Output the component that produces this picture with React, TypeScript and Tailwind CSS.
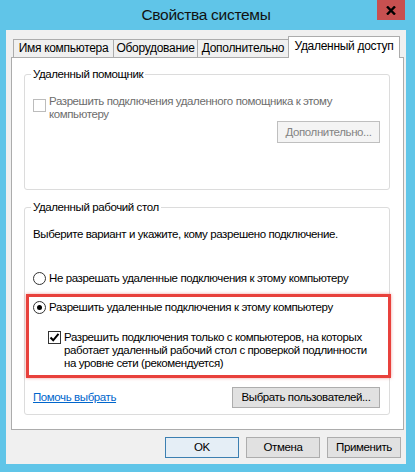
import React from "react";

function CheckBox({ checked, disabled }: { checked?: boolean; disabled?: boolean }) {
  return (
    <div
      className={`w-[13px] h-[13px] shrink-0 border bg-white flex items-center justify-center ${
        disabled ? "border-[#bcbcbc]" : "border-[#333333]"
      }`}
    >
      {checked && (
        <svg width="11" height="11" viewBox="0 0 11 11">
          <path d="M1.5 5.5 L4.2 8.3 L9.5 1.8" fill="none" stroke="#000" strokeWidth="2" />
        </svg>
      )}
    </div>
  );
}

function Radio({ checked }: { checked?: boolean }) {
  return (
    <div className="w-[13px] h-[13px] shrink-0 rounded-full border border-[#333333] bg-white flex items-center justify-center">
      {checked && <div className="w-[5px] h-[5px] rounded-full bg-black" />}
    </div>
  );
}

export default function App() {
  return (
    <div className="w-[415px] h-[472px] bg-[#60c5e8] flex flex-col pl-[6px] pr-[9px] pb-[8px] font-['Liberation_Sans',sans-serif] text-[11.5px] leading-[13px] tracking-[-0.4px] text-black">
      {/* title bar */}
      <div className="relative h-[30px] flex items-center justify-center">
        <span className="text-[15.5px] leading-[18px] tracking-[-0.3px] text-[#111]">Свойства системы</span>
        <div className="absolute right-[1px] top-0 w-[28px] h-[20px] bg-[#c75050] flex items-center justify-center">
          <svg width="10" height="9" viewBox="0 0 10 9">
            <path d="M1 0.5 L9 8.5 M9 0.5 L1 8.5" stroke="#000" strokeWidth="2.4" />
          </svg>
        </div>
      </div>

      {/* client */}
      <div className="flex-1 bg-[#f0f0f0] flex flex-col pl-[5px] pr-[2px] pt-[6px]">
        {/* tabs */}
        <div className="flex items-end h-[21px] pl-[2px] text-[12px] tracking-[-0.3px]">
          <div className="w-[101px] h-[18px] border border-b-0 border-[#acacac] bg-[#f0f0f0] flex items-center justify-center whitespace-nowrap">
            Имя компьютера
          </div>
          <div className="-ml-px w-[85px] h-[18px] border border-b-0 border-[#acacac] bg-[#f0f0f0] flex items-center justify-center whitespace-nowrap">
            Оборудование
          </div>
          <div className="-ml-px w-[92px] h-[18px] border border-b-0 border-[#acacac] bg-[#f0f0f0] flex items-center justify-center whitespace-nowrap">
            Дополнительно
          </div>
          <div className="relative z-10 -ml-px -mb-px w-[112px] h-[22px] border border-b-0 border-[#acacac] bg-white flex items-center justify-center whitespace-nowrap pb-[2px]">
            Удаленный доступ
          </div>
        </div>

        {/* panel */}
        <div className="h-[373px] border border-[#acacac] bg-white flex flex-col pl-[12px] pr-[13px] pt-[10px]">
          {/* group 1 */}
          <fieldset className="h-[122px] border border-[#dcdcdc] rounded-[3px] flex flex-col">
            <legend className="ml-[6px] px-[2px]">Удаленный помощник</legend>
            <div className="flex items-start gap-[3px] pl-[8px] mt-[14px] text-[#6d6d6d]">
              <div className="mt-[4px]">
                <CheckBox disabled />
              </div>
              <div className="whitespace-nowrap">
                Разрешить подключения удаленного помощника к этому
                <br />
                компьютеру
              </div>
            </div>
            <div className="flex-1" />
            <div className="self-end mr-[9px] mb-[4px] w-[103px] h-[22px] border border-[#bfbfbf] bg-[#f4f4f4] text-[#838383] flex items-center justify-center whitespace-nowrap">
              Дополнительно...
            </div>
          </fieldset>

          {/* group 2 */}
          <fieldset className="mt-[11px] h-[214px] border border-[#dcdcdc] rounded-[3px] flex flex-col">
            <legend className="ml-[6px] px-[2px]">Удаленный рабочий стол</legend>
            <div className="pl-[8px] mt-[14px] whitespace-nowrap">Выберите вариант и укажите, кому разрешено подключение.</div>
            <div className="flex items-center gap-[3px] pl-[8px] mt-[31px] whitespace-nowrap">
              <Radio />
              <span>Не разрешать удаленные подключения к этому компьютеру</span>
            </div>
            <div className="mt-[9px] ml-[1px] -mr-[2px] border-[3px] border-[#e8413c] pl-[4px] pt-[4px] pb-[5px] shadow-[0_0_3px_rgba(232,65,60,0.5)]">
              <div className="flex items-center gap-[3px] whitespace-nowrap">
                <Radio checked />
                <span>Разрешить удаленные подключения к этому компьютеру</span>
              </div>
              <div className="flex items-start gap-[3px] pl-[15px] mt-[17px]">
                <div className="mt-[0px]">
                  <CheckBox checked />
                </div>
                <div className="whitespace-nowrap">
                  Разрешить подключения только с компьютеров, на которых
                  <br />
                  работает удаленный рабочий стол с проверкой подлинности
                  <br />
                  на уровне сети (рекомендуется)
                </div>
              </div>
            </div>
            <div className="flex items-center justify-between pl-[8px] pr-[9px] mt-[9px]">
              <span className="text-[#0066cc] underline">Помочь выбрать</span>
              <div className="w-[148px] h-[21px] border border-[#adadad] bg-[#e1e1e1] flex items-center justify-center whitespace-nowrap">
                Выбрать пользователей...
              </div>
            </div>
          </fieldset>
        </div>

        {/* bottom buttons */}
        <div className="flex justify-end gap-[7px] pr-[3px] mt-[7px]">
          <div className="w-[74px] h-[21px] border border-[#3c7fb1] bg-[#e5eef6] flex items-center justify-center">
            OK
          </div>
          <div className="w-[74px] h-[21px] border border-[#adadad] bg-[#e1e1e1] flex items-center justify-center">
            Отмена
          </div>
          <div className="w-[74px] h-[21px] border border-[#adadad] bg-[#e1e1e1] flex items-center justify-center">
            Применить
          </div>
        </div>
      </div>
    </div>
  );
}
